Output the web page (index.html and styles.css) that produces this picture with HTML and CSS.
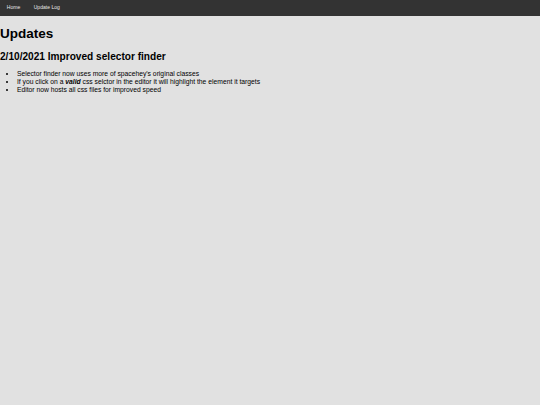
FILE: index.html
```html
<!DOCTYPE html>
<html>
<head>
<meta charset="utf-8">
<link rel="stylesheet" href="styles.css">
</head>
<body>
<nav class="topnav">
  <a class="navlink" href="#">Home</a>
  <a class="navlink" href="#">Update Log</a>
</nav>
<main class="content">
  <h1 class="title">Updates</h1>
  <h2 class="entry-title">2/10/2021 Improved selector finder</h2>
  <ul class="entry-list">
    <li>Selector finder now uses more of spacehey's original classes</li>
    <li>If you click on a <b><i>valid</i></b> css selctor in the editor it will highlight the element it targets</li>
    <li>Editor now hosts all css files for improved speed</li>
  </ul>
</main>
</body>
</html>
```

FILE: styles.css
```css
html, body {
  margin: 0;
  padding: 0;
  background: #e1e1e1;
  color: #000;
  font-family: "Liberation Sans", Arial, sans-serif;
  font-size: 6.75px;
  line-height: 1.15;
}
.topnav {
  display: flex;
  align-items: center;
  height: 16.3px;
  background: #333333;
}
.navlink {
  color: #e8e8e8;
  text-decoration: none;
  font-size: 5.06px;
  padding: 0 6.75px;
}
.content {
  padding: 0;
}
.title {
  font-size: 13.5px;
  font-weight: bold;
  margin: 10.05px 0 9.05px;
}
.entry-title {
  font-size: 10.125px;
  font-weight: bold;
  margin: 9.4px 0 7.4px;
}
.entry-list {
  margin: 6.75px 0;
  padding-left: 16.9px;
}
.entry-list li {
  line-height: 7.76px;
}
```
